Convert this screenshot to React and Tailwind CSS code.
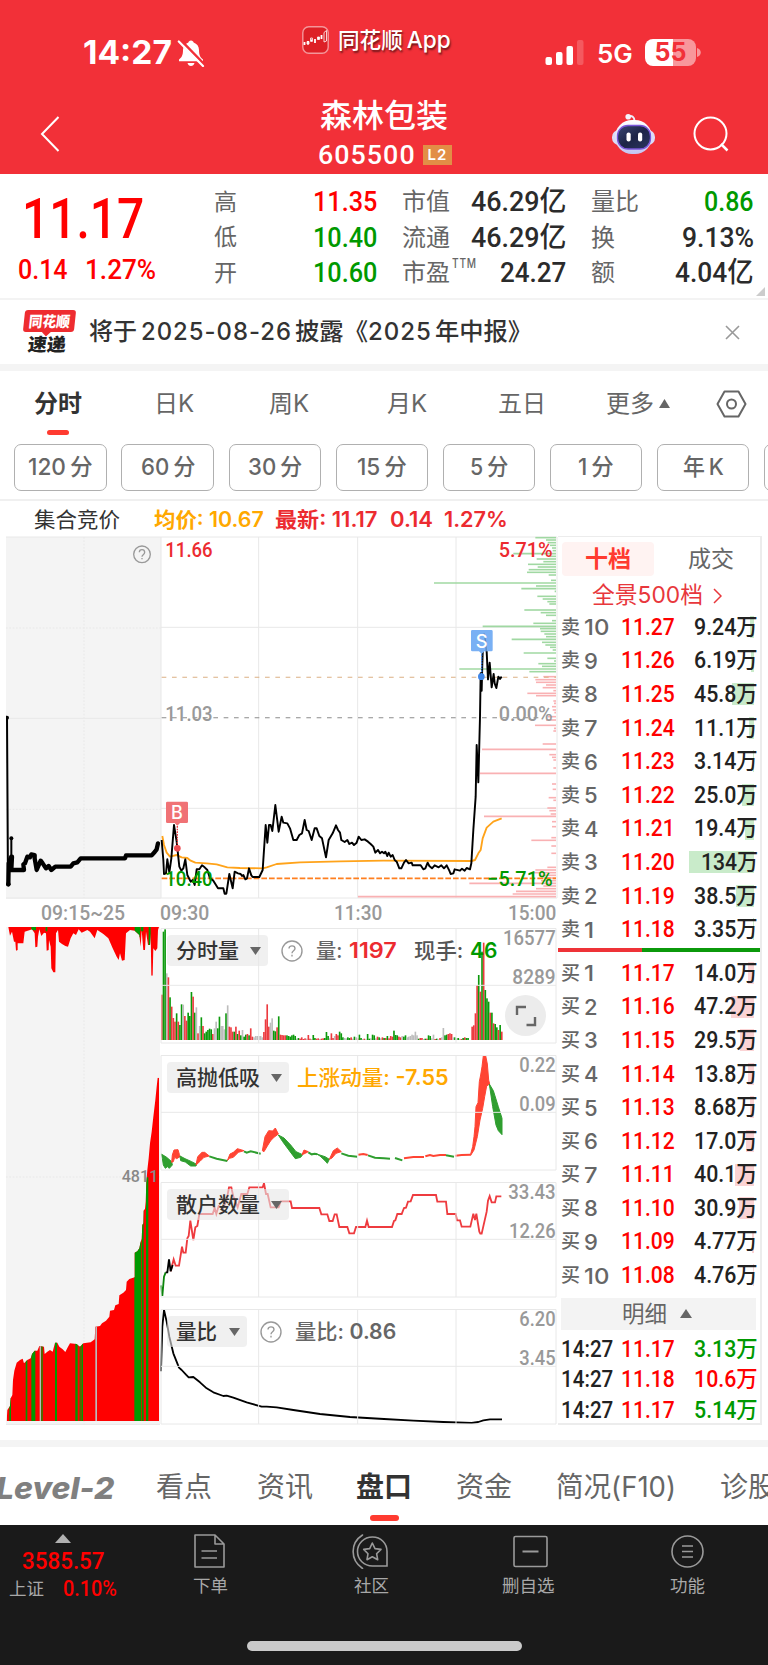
import React, { useLayoutEffect, useRef, useState } from "react";

// Condensed numerals: squeezes its text to exactly w pixels
const Fit = ({ w, className = "", children }) => {
  const ref = useRef(null);
  const [scale, setScale] = useState(1);

  useLayoutEffect(() => {
    const natural = ref.current.offsetWidth;
    if (natural) setScale(w / natural);
  }, [w, children]);

  return (
    <span className="block shrink-0 whitespace-nowrap leading-none" style={{ width: w }}>
      <span
        ref={ref}
        className={`inline-block origin-left leading-none ${className}`}
        style={{ transform: `scaleX(${scale})` }}
      >
        {children}
      </span>
    </span>
  );
};

const num = "font-['Roboto','Noto_Sans_CJK_SC',sans-serif] font-medium";

const periods = ["120分", "60分", "30分", "15分", "5分", "1分", "年K"];
const periodWidths = [65, 54, 54, 50, 38, 36, 41];

const sells = [
  ["10", "11.27", "9.24万", 4],
  ["9", "11.26", "6.19万", 3],
  ["8", "11.25", "45.8万", 22],
  ["7", "11.24", "11.1万", 5],
  ["6", "11.23", "3.14万", 1],
  ["5", "11.22", "25.0万", 12],
  ["4", "11.21", "19.4万", 9],
  ["3", "11.20", "134万", 65],
  ["2", "11.19", "38.5万", 18],
  ["1", "11.18", "3.35万", 1],
];

const buys = [
  ["1", "11.17", "14.0万", 6],
  ["2", "11.16", "47.2万", 23],
  ["3", "11.15", "29.5万", 14],
  ["4", "11.14", "13.8万", 6],
  ["5", "11.13", "8.68万", 4],
  ["6", "11.12", "17.0万", 8],
  ["7", "11.11", "40.1万", 19],
  ["8", "11.10", "30.9万", 15],
  ["9", "11.09", "4.77万", 2],
  ["10", "11.08", "4.76万", 1],
];

const ticks = [
  ["14:27", "11.17", "3.13万", "text-[#009900]"],
  ["14:27", "11.18", "10.6万", "text-[#ff0000]"],
  ["14:27", "11.17", "5.14万", "text-[#009900]"],
];

// Chart data, three units per pixel
const priceLine =
  "485,930 490,990 492,1032 498,1030 502,988 508,1028 514,985 522,885 530,935 538,1010 544,1022 550,1015 556,988 562,1035 572,1055 578,1050 584,1065 590,1018 598,1018 606,1006 614,1012 622,1020 630,1045 640,1052 654,1075 670,1075 674,1091 679,1091 688,1032 698,1075 704,1025 714,1030 722,1032 726,1038 730,1035 736,1048 741,1045 747,1015 754,1036 758,1041 778,1041 788,1020 797,885 802,938 807,885 812,885 817,903 826,825 836,905 845,860 850,878 862,880 870,895 880,930 890,930 898,915 906,910 914,870 920,900 926,903 935,930 944,895 950,895 958,918 966,925 978,982 986,930 998,910 1008,886 1014,900 1020,908 1024,930 1034,936 1042,930 1048,942 1056,938 1062,945 1070,938 1076,920 1084,930 1094,928 1104,935 1112,942 1120,950 1126,968 1134,960 1140,970 1146,965 1152,970 1156,965 1162,978 1166,968 1172,980 1178,975 1184,990 1190,995 1198,1015 1204,1015 1212,998 1218,990 1226,1000 1235,998 1238,1006 1262,1006 1270,1018 1276,1015 1283,998 1288,1008 1296,1015 1304,1006 1316,1012 1324,1006 1332,1015 1340,1006 1348,1022 1352,1032 1360,1030 1364,1018 1380,1022 1386,1016 1394,1022 1400,1014 1410,1018 1414,1000 1420,900 1427,800 1430,645 1435,757 1440,560 1442,430 1445,482 1447,400 1450,312 1456,330 1460,365 1464,448 1469,398 1475,472 1481,432 1484,460 1489,474 1495,440 1500,447 1505,440";
const avgLine =
  "487,918 492,945 500,968 510,980 530,975 545,982 562,984 572,992 586,998 620,1000 650,1003 682,1012 720,1014 788,1015 800,1012 830,1002 900,997 1020,994 1150,992 1415,993 1425,990 1435,970 1442,960 1448,925 1460,893 1480,875 1505,865";
const auctionLine =
  "25,1062 26,1000 34,980 36,980 34,1020 72,1020 70,1003 75,1000 82,980 90,982 94,973 104,975 104,985 110,1020 122,992 128,1000 138,1015 146,1008 154,1020 166,1010 212,1010 220,1000 232,997 242,985 375,985 378,976 455,976 464,966 470,958 474,940";

const askDepth = [
  [23, 62], [30, 30], [38, 25], [46, 18], [54, 12], [62, 10], [71, 128], [79, 20], [87, 58], [95, 38], [103, 84],
  [111, 55], [119, 82], [127, 87], [135, 22], [151, 15], [159, 366], [168, 60], [176, 104], [184, 4], [199, 56],
  [207, 40], [215, 26], [222, 20], [240, 95], [248, 46], [256, 30], [272, 12], [280, 68], [289, 220], [296, 48],
  [304, 46], [312, 35], [320, 30], [328, 133], [337, 42], [345, 32], [352, 18], [360, 10], [369, 97], [385, 26],
  [393, 6], [401, 53], [409, 42], [417, 290], [425, 80],
];
const bidDepth = [
  [440, 38], [449, 62], [457, 60], [465, 30], [473, 40], [482, 8], [490, 86], [497, 60], [513, 8], [520, 6],
  [530, 12], [540, 10], [548, 5], [560, 25], [570, 30], [586, 63], [595, 6], [603, 8], [642, 40], [658, 222],
  [674, 20], [682, 12], [690, 8], [714, 8], [730, 228], [762, 12], [778, 10], [803, 22], [811, 8], [834, 26],
  [842, 20], [852, 16], [859, 216], [875, 12], [890, 12], [923, 14], [931, 74], [948, 14], [970, 14], [1012, 26],
  [1020, 62], [1028, 70], [1036, 50], [1044, 40], [1052, 45], [1060, 260], [1068, 38], [1076, 60], [1084, 120],
  [1092, 130], [1100, 594],
];

const volHead =
  "r136 g325 g332 y200 r188 g128 r100 r66 r55 g80 r55 g45 g107 y106 r72 r58 g82 g72 g144 r130 g82 y98 r20 y42 g68 r42 g20 g25 g30 g34 g32 r18 y35 y55 g35 g70 y42 y42 y32 g80 y104 r40 r38 r25 g25 r40 g18 r28 g14 y30 g10 g16 r18 g14 r35 r10 y8 y12 y12 y12 y12 y8 r24 r62 r107 r40 y52 y65 g28 g26 r38 g71 r16 r15 r14 r14 g14 g12 g10 g14 g16 g12";
const volMid =
  "y4 g6 r4 r8 r3 r5 y4 r15 r4 y3 g15 g6 r4 r5 y3 r4 r5 g6 g24 g12 y5 r20 r6 y12 r18 r14 g25 g20 g8 y6 y5 g8 g6 r8 y4 g10 y8 r5 g16 g6 y3 r4 y2 g18 g4 y5 g16 g14 y5 r10 g8 y5 r8 g6 r6 g12 r5 r12 r10 g28 g15 g14 r10 r8 y12 g10 g14 y8 y10 y12 y16 y14 y25 y14 g4 r6 r6 y3 g4 r4 g14 g12 y5 y16 r3 g4 y2 r6 y8 y36 g14 g16 r18 r20 r18 y8 g8 y5 g6 y4 r3 g6 r8 g6 g6";
const volTail =
  "r40 r44 r80 r165 g195 r145 g265 r292 g150 g125 g115 r82 g82 r50 g48 g38 r30 g45 r25";

const barColor = { r: "#ec3a3f", g: "#0b990b", y: "#bdbdbd" };

const bars = (list, start) =>
  list.split(" ").map((b, i) => ({
    x: start + i * 4.94,
    color: barColor[b[0]],
    h: Number(b.slice(1)),
  }));

const volume = [...bars(volHead, 483), ...bars(volMid, 888), ...bars(volTail, 1414)];

const auctionProfile =
  "20,723 22,690 30,678 32,655 37,645 39,600 43,572 50,548 60,540 68,536 72,550 82,540 92,535 96,522 104,512 112,512 118,498 132,500 134,522 142,515 150,510 158,515 165,488 172,488 178,500 188,508 196,516 204,500 210,490 230,492 240,500 250,490 272,487 284,478 286,440 300,438 306,430 318,422 328,410 330,392 342,390 346,376 356,372 358,346 370,338 378,330 380,305 388,297 404,292 404,218 412,214 418,205 421,190 425,176 427,135 430,130 431,92 435,86 437,65 439,8 442,-30 446,-65 450,-110 455,-145 460,-190 466,-240 470,-280 473,-307 477,-307 477,723";
const auctionStrips = [
  [28, 5], [77, 5], [94, 12], [124, 4], [165, 6], [226, 7], [239, 3], [244, 5], [403, 21], [426, 5], [438, 7],
];
const auctionTop =
  "22,21 25,21 30,47 36,35 42,65 46,65 48,92 53,90 53,70 70,70 74,35 90,30 96,28 104,40 106,82 112,80 114,50 118,28 124,48 132,38 138,40 140,92 146,90 147,60 152,80 154,145 160,157 166,157 168,40 174,30 177,65 186,72 196,78 204,80 212,55 220,40 228,45 236,28 245,38 262,30 270,35 284,55 292,30 310,42 325,55 338,85 350,110 356,120 360,100 366,122 374,120 378,40 390,30 404,32 418,45 422,80 425,30 430,90 435,90 438,35 444,75 450,75 452,40 454,167 458,167 460,85 466,93 472,85 474,30 477,21";

const swing = [
  ["#2f9e2f", "484,702 500,712 515,725 517,735 508,745 502,740 496,745 490,735 487,715"],
  ["#ff4433", "515,727 517,705 522,690 534,689 538,703 540,710 530,716 524,712 520,725"],
  ["#2f9e2f", "540,708 555,716 575,725 590,733 588,738 572,738 556,726 542,722"],
  ["#ff4433", "588,735 593,710 606,697 614,697 628,708 612,712 600,724"],
  ["#ff4433", "682,722 690,702 700,697 712,686 732,692 715,697 700,712 688,715"],
  ["#ff4433", "787,692 795,650 806,632 818,633 826,624 835,642 822,652 812,662 802,678 792,695"],
  ["#2f9e2f", "835,645 852,654 872,675 888,695 908,704 902,712 886,716 868,692 848,665"],
  ["#ff4433", "906,704 912,690 925,695 916,700"],
  ["#2f9e2f", "950,702 975,710 988,718 982,730 975,722 960,708"],
  ["#ff4433", "988,718 1000,692 1012,684 1024,695 1008,700 996,714"],
  ["#ff4433", "1412,702 1418,680 1422,650 1425,620 1428,560 1434,548 1438,485 1442,465 1446,440 1450,407 1457,407 1462,432 1466,480 1469,492 1460,498 1454,530 1448,565 1440,600 1432,650 1422,690 1412,706"],
  ["#2f9e2f", "1468,492 1480,512 1495,560 1506,595 1506,644 1495,632 1488,615 1478,560"],
];
const swingLines = [
  ["#2f9e2f", "628,709 650,716 682,723"],
  ["#2f9e2f", "732,694 740,698 752,694 782,701"],
  ["#2f9e2f", "925,697 935,703 944,701 952,703"],
  ["#2f9e2f", "1024,700 1045,707 1072,710"],
  ["#ff4433", "1075,704 1090,702 1103,705"],
  ["#2f9e2f", "1104,706 1125,713 1152,715 1170,716"],
  ["#2f9e2f", "1185,714 1207,721"],
  ["#ff4433", "1212,715 1240,711 1272,711"],
  ["#ff4433", "1276,709 1290,705 1300,708 1320,705 1338,705"],
  ["#2f9e2f", "1338,706 1362,710"],
  ["#ff4433", "1366,707 1385,705 1412,704"],
];

const holderLine =
  "512,274 521,238 527,257 537,257 546,200 550,218 557,218 562,175 566,168 571,122 580,180 586,142 592,138 598,102 638,102 644,84 649,102 656,78 670,84 680,60 687,22 694,22 700,50 713,82 724,42 742,42 748,22 788,22 792,10 798,42 803,42 812,82 836,82 842,64 872,64 876,84 958,84 964,103 982,103 988,123 998,123 1004,103 1010,103 1018,141 1042,141 1048,160 1062,160 1068,141 1096,141 1101,122 1106,141 1176,141 1182,123 1186,121 1192,102 1205,102 1212,84 1218,83 1224,65 1232,64 1239,45 1308,45 1312,65 1338,65 1342,102 1367,102 1371,121 1380,121 1385,140 1411,140 1420,101 1425,120 1429,101 1438,155 1441,161 1445,161 1460,95 1464,62 1469,48 1475,67 1485,67 1489,49 1504,49";
const ratioLine =
  "483,574 487,440 492,390 500,425 508,470 520,520 537,563 545,570 558,584 566,592 580,591 600,607 620,625 640,637 670,648 680,647 700,653 740,667 785,680 800,680 830,682 880,690 960,702 1050,711 1152,717 1240,722 1330,726 1415,729 1435,726 1450,721 1470,718 1506,718";

const AxisText = ({ x, y, len, fill = "#999", size = 63, children }) => (
  <text
    x={x}
    y={y}
    textLength={len}
    lengthAdjust="spacingAndGlyphs"
    fill={fill}
    fontSize={size}
    fontFamily="Roboto, sans-serif"
    fontWeight="500"
  >
    {children}
  </text>
);

// Grid, frame and the two scale values of a lower pane
const Pane = ({ top, high, low, highLen, lowLen, children, overlay }) => (
  <div className="relative h-[116px] w-[397px]">
    <svg className="block h-full w-full" viewBox={`480 ${top} 1191 348`}>
      {overlay}
      <g stroke="#e8e8e8" strokeWidth="3" fill="none">
        <path d={`M483 ${top + 1.5}H1668V${top + 345}H483Z`} />
        <path d={`M483 ${top + 172}H1668M776 ${top}V${top + 345}M1073 ${top}V${top + 345}M1368 ${top}V${top + 345}`} />
      </g>
      <AxisText x={1667 - highLen} y={top + 52} len={highLen}>{high}</AxisText>
      <AxisText x={1667 - lowLen} y={top + 168} len={lowLen}>{low}</AxisText>
    </svg>
    {children}
  </div>
);

const Pill = ({ label, w, textW }) => (
  <div
    className="flex h-[31px] items-center rounded-[4px] bg-[#e6e6e6]/60 pl-[9px] pr-[7px]"
    style={{ width: w }}
  >
    <Fit w={textW} className="text-[21px] font-medium text-[#333]">{label}</Fit>
    <svg className="ml-auto h-[8px] w-[11px]" viewBox="0 0 11 8">
      <path d="M0 0H11L5.5 8Z" fill="#666" />
    </svg>
  </div>
);

const Help = ({ className = "" }) => (
  <svg className={`h-[22px] w-[22px] shrink-0 ${className}`} viewBox="0 0 22 22" fill="none" stroke="#999" strokeWidth="1.4">
    <circle cx="11" cy="11" r="10" />
    <path d="M8 8.6C8 5 14 5 14 8.6C14 11 11 10.6 11 13.2M11 14.8V16.4" />
  </svg>
);

const StatusBar = () => (
  <div className="relative flex h-[96px] items-start pt-[38px] text-white">
    <div className="ml-[83px] flex h-[30px] items-center">
      <Fit w={89} className="text-[32px] font-bold">14:27</Fit>
      <svg className="ml-[5px] h-[28px] w-[28px]" viewBox="0 0 28 28">
        <path d="M14 1.5c-1.6 0-2.4 1-2.6 2.1C8 4.8 6 7.5 6 11c0 6-1.7 7.5-4 9.5v1.8h24v-1.8c-2.3-2-4-3.5-4-9.5 0-3.5-2-6.2-5.4-7.4C16.4 2.5 15.6 1.5 14 1.5zM10.5 24h7c-.5 1.9-1.8 3-3.5 3s-3-1.1-3.5-3z" fill="#fff" />
        <path d="M4 1.5L28 26" stroke="#f23038" strokeWidth="2.6" />
        <path d="M1.8 2.5L26 27" stroke="#fff" strokeWidth="2.2" strokeLinecap="round" />
      </svg>
    </div>
    <div className="absolute left-[302px] top-[26px] flex items-center">
      <svg className="h-[28px] w-[27px]" viewBox="0 0 27 28" fill="none">
        <rect x="0.8" y="0.8" width="25.4" height="26.4" rx="6" fill="#dd2026" stroke="#f4969a" strokeWidth="1.4" />
        <path d="M2.500 16V19M6 15V18.500M9.500 13.500V15M13 13V17M16.500 11V13.500M19.500 9V13" stroke="#fff" strokeWidth="1.800" />
        <path d="M5 15.500H7V18H5ZM8.600 12H10.400V15.500H8.600ZM15.500 11H17.500V13.500H15.500ZM22 16V6.500L24.500 4.500V15L22 16" stroke="#fff" strokeWidth="0.800" />
      </svg>
      <span className="ml-[9px] [text-shadow:1px_2px_2px_rgba(0,0,0,0.55)]">
        <Fit w={113} className="text-[22px] font-medium">
          同花顺<span className="ml-[4px] text-[23px]">App</span>
        </Fit>
      </span>
    </div>
    <div className="ml-auto mr-[67px] flex h-[28px] items-center">
      <svg className="h-[25px] w-[39px]" viewBox="0 0 39 25" fill="#fff">
        <rect x="0.5" y="17" width="6.5" height="8" rx="2" />
        <rect x="11" y="12" width="6.5" height="13" rx="2" />
        <rect x="21.5" y="6" width="6.5" height="19" rx="2" />
        <rect x="32" y="0" width="6.5" height="25" rx="2" opacity="0.2" />
      </svg>
      <span className="ml-[13px] mt-[3px]">
        <Fit w={36} className="text-[26px] font-semibold">5G</Fit>
      </span>
      <div className="ml-[12px] flex h-[27px] w-[51px] items-center justify-center rounded-[8px] bg-[linear-gradient(90deg,#fff_0_28px,#f8979b_28px)] text-[25px] font-bold leading-none text-[#f23038]">
        55
      </div>
      <svg className="ml-[1px] h-[9px] w-[4px]" viewBox="0 0 4 9">
        <path d="M0 0C5 1 5 8 0 9Z" fill="#f8979b" />
      </svg>
    </div>
  </div>
);

const Header = () => (
  <header className="h-[174px] bg-[#f23038]">
    <StatusBar />
    <div className="flex h-[78px] text-white">
      <svg className="ml-[40px] mt-[20px] h-[36px] w-[20px]" viewBox="0 0 20 36" fill="none" stroke="#fff" strokeWidth="2">
        <path d="M18.5 1L2 18L18.5 35" />
      </svg>
      <div className="ml-[258px] w-[138px]">
        <div className="ml-[2px] mt-[4px]">
          <Fit w={128} className="text-[32px] font-medium">森林包装</Fit>
        </div>
        <div className="mt-[11px] flex h-[24px] items-center">
          <Fit w={98} className={`text-[26px] tracking-[1px] ${num}`}>605500</Fit>
          <span className="ml-[7px] flex h-[20px] w-[29px] items-center justify-center bg-[#e28e46] text-[15px] font-semibold tracking-[1px]">L2</span>
        </div>
      </div>
      <svg className="ml-[155px] mt-[17px] h-[42px] w-[45px]" viewBox="0 0 45 42">
        <defs>
          <linearGradient id="shell" x1="0" y1="0" x2="0" y2="1">
            <stop offset="0" stopColor="#fff" />
            <stop offset="1" stopColor="#c3c5f2" />
          </linearGradient>
          <linearGradient id="visor" x1="0" y1="0" x2="1" y2="1">
            <stop offset="0" stopColor="#3a4672" />
            <stop offset="0.5" stopColor="#1d2447" />
            <stop offset="1" stopColor="#2b3560" />
          </linearGradient>
        </defs>
        <path d="M17 3.5C21 2 23.5 4 23.5 8" stroke="#eeeefa" strokeWidth="2" fill="none" />
        <circle cx="17.2" cy="3.8" r="2.8" fill="#f4f4fc" />
        <rect x="1" y="17" width="43" height="15" rx="7" fill="#dcdcf8" />
        <rect x="4" y="7" width="37" height="34" rx="17" fill="url(#shell)" />
        <rect x="6.5" y="12.5" width="33" height="23.5" rx="10.5" fill="url(#visor)" stroke="#7a55d8" strokeWidth="1.3" />
        <rect x="15.5" y="19.5" width="4.2" height="9" rx="2" fill="#fff" />
        <rect x="27" y="19.5" width="4.2" height="9" rx="2" fill="#fff" />
      </svg>
      <svg className="ml-[37px] mt-[20px] h-[36px] w-[36px]" viewBox="0 0 36 36" fill="none" stroke="#fff" strokeWidth="2">
        <circle cx="17.5" cy="17.5" r="16" />
        <path d="M28 28L34.5 34.5" strokeWidth="2.5" />
      </svg>
    </div>
  </header>
);

const Quote = () => (
  <section className="relative flex h-[126px] border-b-2 border-[#f3f3f3]">
    <div className="w-[214px] text-[#ff0000]">
      <div className="ml-[22px] mt-[18px]">
        <Fit w={122} className={`text-[55px] ${num}`}>11.17</Fit>
      </div>
      <div className="ml-[18px] mt-[9px] flex">
        <Fit w={50} className={`text-[28px] ${num}`}>0.14</Fit>
        <span className="ml-[17px]">
          <Fit w={71} className={`text-[28px] ${num}`}>1.27%</Fit>
        </span>
      </div>
    </div>
    <div className="flex w-[163px] flex-col gap-[7.5px] pt-[14px]">
      {[["高", "11.35", "text-[#ff0000]"], ["低", "10.40", "text-[#009900]"], ["开", "10.60", "text-[#009900]"]].map(([l, v, c]) => (
        <div key={l} className="flex h-[28px] items-center justify-between">
          <span className="text-[23px] leading-none text-[#666]">{l}</span>
          <Fit w={64} className={`text-[28px] ${num} ${c}`}>{v}</Fit>
        </div>
      ))}
    </div>
    <div className="ml-[25px] flex w-[164px] flex-col gap-[7.5px] pt-[14px]">
      {[["市值", "46.29亿", 95], ["流通", "46.29亿", 95], ["市盈", "24.27", 66]].map(([l, v, w]) => (
        <div key={l} className="flex h-[28px] items-center">
          <span className="text-[24px] leading-none text-[#666]">{l}</span>
          {l === "市盈" && (
            <span className="ml-[2px] -mt-[22px]">
              <Fit w={25} className="text-[13px] font-medium tracking-[1px] text-[#666]">TTM</Fit>
            </span>
          )}
          <span className="ml-auto">
            <Fit w={w} className={`text-[28px] text-[#2b2b2b] ${num}`}>{v}</Fit>
          </span>
        </div>
      ))}
    </div>
    <div className="ml-[25px] flex w-[163px] flex-col gap-[7.5px] pt-[14px]">
      {[["量比", "0.86", 50, "text-[#009900]"], ["换", "9.13%", 72, "text-[#2b2b2b]"], ["额", "4.04亿", 79, "text-[#2b2b2b]"]].map(([l, v, w, c]) => (
        <div key={l} className="flex h-[28px] items-center justify-between">
          <span className="text-[24px] leading-none text-[#666]">{l}</span>
          <Fit w={w} className={`text-[28px] ${num} ${c}`}>{v}</Fit>
        </div>
      ))}
    </div>
    <svg className="absolute bottom-[2px] right-[3px] h-[9px] w-[9px]" viewBox="0 0 9 9">
      <path d="M9 0V9H0Z" fill="#ccc" />
    </svg>
  </section>
);

const NewsRow = () => (
  <section className="flex h-[71px] items-center border-b-[7px] border-[#f4f4f4]">
    <div className="ml-[22px] flex w-[54px] flex-col items-center">
      <div className="relative flex h-[22px] w-[51px] -skew-x-6 items-center justify-center rounded-[3px] bg-[#ee2c30] text-white">
        <Fit w={41} className="text-[15px] font-black">同花顺</Fit>
        <span className="absolute -bottom-[3px] left-[20px] h-[7px] w-[7px] rotate-45 bg-[#ee2c30]"></span>
      </div>
      <div className="mr-[4px] mt-[4px] -skew-x-6 text-[#222]">
        <Fit w={38} className="text-[18px] font-black">速递</Fit>
      </div>
    </div>
    <div className="ml-[13px] flex items-center text-[24px] font-medium text-[#333]">
      <Fit w={48}>将于</Fit>
      <span className="ml-[4px]"><Fit w={151} className="tracking-[1px]">2025-08-26</Fit></span>
      <span className="ml-[3px]"><Fit w={73}>披露《</Fit></span>
      <Fit w={64} className="tracking-[1px]">2025</Fit>
      <span className="ml-[3px]"><Fit w={97}>年中报》</Fit></span>
    </div>
    <svg className="ml-auto mr-[28px] h-[15px] w-[15px]" viewBox="0 0 15 15" stroke="#999" strokeWidth="1.6">
      <path d="M1 1L14 14M14 1L1 14" />
    </svg>
  </section>
);

const KTabs = () => (
  <nav className="relative flex h-[73px] items-start pt-[21px] text-[24px] leading-none text-[#666]">
    <div className="ml-[34px] w-[120px] font-bold text-[#333]">
      分时
      <div className="ml-[13px] mt-[14px] h-[5px] w-[22px] rounded-full bg-[#ff3b30]"></div>
    </div>
    <div className="w-[115px]">日K</div>
    <div className="w-[118px]">周K</div>
    <div className="w-[111px]">月K</div>
    <div className="w-[108px]">五日</div>
    <div className="flex w-[110px]">
      更多
      <svg className="ml-[5px] mt-[7px] h-[9px] w-[11px]" viewBox="0 0 11 9">
        <path d="M5.5 0L11 9H0Z" fill="#666" />
      </svg>
    </div>
    <svg className="-mt-[2px] h-[28px] w-[31px]" viewBox="0 0 31 28" fill="none" stroke="#666" strokeWidth="2">
      <path d="M8.5 1.5H22.5L29.5 14L22.5 26.5H8.5L1.5 14Z" strokeLinejoin="round" />
      <circle cx="15.5" cy="14" r="4.5" />
    </svg>
  </nav>
);

const PeriodBar = () => (
  <div className="flex h-[57px] gap-[14.6px] overflow-hidden border-b-2 border-[#f0f0f0] pl-[14.4px]">
    {periods.map((p, i) => (
      <div key={p} className="flex h-[47px] w-[92.5px] shrink-0 items-center justify-center rounded-[7px] border border-[#b0b0b0]">
        <Fit w={periodWidths[i]} className="text-[23px] font-medium text-[#666]">
          {p.slice(0, -1)}
          <span className="ml-[4px]">{p.slice(-1)}</span>
        </Fit>
      </div>
    ))}
    <div className="h-[47px] w-[92px] shrink-0 rounded-[7px] border border-[#b0b0b0]"></div>
  </div>
);

const Legend = () => (
  <div className="flex h-[35px] items-center pt-[2px]">
    <span className="ml-[34px]">
      <Fit w={86} className="text-[21px] text-[#333]">集合竞价</Fit>
    </span>
    <span className="ml-[34px]">
      <Fit w={110} className="text-[21px] font-semibold text-[#ffa800]">均价: 10.67</Fit>
    </span>
    <span className="ml-[11px]">
      <Fit w={103} className="text-[21px] font-semibold text-[#ec2b30]">最新: 11.17</Fit>
    </span>
    <span className="ml-[12px]">
      <Fit w={43} className="text-[21px] font-semibold text-[#ec2b30]">0.14</Fit>
    </span>
    <span className="ml-[11px]">
      <Fit w={64} className="text-[21px] font-semibold text-[#ec2b30]">1.27%</Fit>
    </span>
  </div>
);

const PriceChart = () => (
  <svg className="block h-[363px] w-[552px]" viewBox="18 18 1656 1089">
    <rect x="18" y="21" width="465" height="1086" fill="#f4f4f4" />
    <g stroke="#e8e8e8" strokeWidth="3" fill="none">
      <path d="M18 21H1671V1104H18" />
      <path d="M483 21V1104M776 21V1104M1073 21V1104M1368 21V1104M483 292H1668M483 835H1668M18 565H483" />
      <path d="M252 21V1104M18 294H483M18 838H483" strokeDasharray="5 5" />
    </g>
    <g stroke="#a0d8a2" strokeWidth="4.8">
      {askDepth.map(([y, l]) => <path key={y} d={`M${1668 - l} ${y}H1668`} />)}
    </g>
    <g stroke="#f9b1b3" strokeWidth="4.8">
      {bidDepth.map(([y, l]) => <path key={y} d={`M${1668 - l} ${y}H1668`} />)}
    </g>
    <path d="M485 442H1668" stroke="#dcb084" strokeWidth="3.2" strokeDasharray="14 17" />
    <path d="M485 563H1620" stroke="#8c8c8c" strokeWidth="3.2" strokeDasharray="14 17" />
    <path d="M485 1045H1668" stroke="#ff7f1f" strokeWidth="5" strokeDasharray="17 6" />
    <path d="M21 562L24 1062M34 925V1020" stroke="#000" strokeWidth="6" />
    <circle cx="21" cy="563" r="6" />
    <circle cx="25" cy="1063" r="7" />
    <circle cx="34" cy="925" r="6" />
    <polyline points={auctionLine} fill="none" stroke="#000" strokeWidth="13" strokeLinejoin="round" strokeLinecap="round" />
    <polyline points={avgLine} fill="none" stroke="#ffa31a" strokeWidth="5.5" strokeLinejoin="round" />
    <polyline points={priceLine} fill="none" stroke="#000" strokeWidth="5.8" strokeLinejoin="round" />

    <AxisText x={496} y={81} len={142} fill="#ec2b30">11.66</AxisText>
    <AxisText x={496} y={574} len={142}>11.03</AxisText>
    <AxisText x={496} y={1067} len={142} fill="#009900">10.40</AxisText>
    <AxisText x={1496} y={81} len={162} fill="#ec2b30">5.71%</AxisText>
    <AxisText x={1496} y={574} len={162}>0.00%</AxisText>
    <AxisText x={1462} y={1067} len={196} fill="#009900">−5.71%</AxisText>

    <g fill="none" stroke="#999" strokeWidth="4">
      <circle cx="426" cy="73" r="25" />
      <path d="M418 67C418 56 434 56 434 67C434 74 426 74 426 80M426 84V88" />
    </g>

    <path d="M532 880V955" stroke="#ec3a3f" strokeWidth="4" strokeDasharray="5 3" />
    <circle cx="532" cy="955" r="10" fill="#ee4a50" />
    <path d="M502 815H560Q564 815 564 819V875Q564 879 560 879H540L532 887L524 879H502Q498 879 498 875V819Q498 815 502 815Z" fill="#f07275" />
    <text x="531" y="867" textAnchor="middle" fill="#fff" fontSize="54" fontFamily="Inter, sans-serif" fontWeight="500">B</text>

    <path d="M1445 365V440" stroke="#3f86e8" strokeWidth="4" strokeDasharray="5 3" />
    <circle cx="1444" cy="440" r="10" fill="#3f86e8" />
    <path d="M1417 300H1474Q1478 300 1478 304V360Q1478 364 1474 364H1453L1445 372L1437 364H1417Q1413 364 1413 360V304Q1413 300 1417 300Z" fill="#79b0f4" />
    <path d="M1452 310L1457 335L1459 364" fill="none" stroke="#4d6f99" strokeWidth="4" opacity="0.6" />
    <text x="1445" y="353" textAnchor="middle" fill="#fff" fontSize="55" fontFamily="Inter, sans-serif" fontWeight="500">S</text>
  </svg>
);

const TimeAxis = () => (
  <div className={`flex h-[29px] w-[552px] items-center text-[21px] text-[#999] ${num}`}>
    <span className="ml-[35px]"><Fit w={84}>09:15~25</Fit></span>
    <span className="ml-[35px]"><Fit w={49}>09:30</Fit></span>
    <span className="ml-[125px]"><Fit w={48}>11:30</Fit></span>
    <span className="ml-[126px]"><Fit w={48}>15:00</Fit></span>
  </div>
);

const AuctionVolume = () => (
  <svg className="-mt-px block h-[498px] w-[154px] shrink-0" viewBox="18 -759 462 1494">
    <defs>
      <clipPath id="auction">
        <polygon points={auctionProfile} />
      </clipPath>
      <clipPath id="auctionTop">
        <polygon points={auctionTop} />
      </clipPath>
    </defs>
    <rect x="18" y="-759" width="462" height="1494" fill="#f4f4f4" />
    <path d="M252 -759V735M18 -9H480" stroke="#e8e8e8" strokeWidth="3" strokeDasharray="5 5" />
    <g clipPath="url(#auction)">
      <rect x="18" y="-320" width="462" height="1043" fill="#ff0000" />
      {auctionStrips.map(([x, w]) => (
        <rect key={x} x={x} y={x === 438 ? -8 : -320} width={w} height="1200" fill="#009900" />
      ))}
      <rect x="119" y="0" width="4" height="723" fill="#bbb" />
      <rect x="286" y="0" width="5" height="723" fill="#bbb" />
    </g>
    <g transform="translate(0 -780)" clipPath="url(#auctionTop)">
      <rect x="18" y="20" width="462" height="200" fill="#ff0000" />
      <path d="M94 20H108V31H94ZM404 20H420V52H404ZM422 20H430V34H422ZM446 20H452V75H446ZM137 20H142V34H137Z" fill="#009900" />
    </g>
    <path d="M18 733H480" stroke="#e8e8e8" strokeWidth="3" />
    <AxisText x={365} y={6} len={110} fill="#888" size={50}>4811</AxisText>
  </svg>
);

const LowerPanes = () => (
  <div className="flex flex-col gap-[11px]">
    <Pane
      top={24} high="16577" low="8289" highLen={158} lowLen={130}
      overlay={volume.map((b) => (
        <rect key={b.x} x={b.x} y={360 - b.h} width="4.9" height={b.h} fill={b.color} />
      ))}
    >
      <div className="absolute left-[7px] top-[7px] flex items-center text-[21px] font-medium">
        <Pill label="分时量" w={101} textW={63} />
        <Help className="ml-[13px]" />
        <span className="ml-[13px] text-[#666]"><Fit w={26}>量:</Fit></span>
        <span className="ml-[7px] text-[#ec2b30]"><Fit w={48} className="font-semibold">1197</Fit></span>
        <span className="ml-[17px] text-[#555]"><Fit w={49}>现手:</Fit></span>
        <span className="ml-[7px] text-[#009900]"><Fit w={27} className="font-semibold">46</Fit></span>
      </div>
      <div className="absolute left-[345px] top-[67px] flex h-[41px] w-[41px] items-center justify-center rounded-full bg-[#ececec]">
        <svg className="h-[22px] w-[22px]" viewBox="0 0 22 22" fill="none" stroke="#666" strokeWidth="2.4">
          <path d="M2 10V2H11M20 12V20H11.5" />
        </svg>
      </div>
    </Pane>
    <Pane
      top={405} high="0.22" low="0.09" highLen={109} lowLen={109}
      overlay={
        <>
          {swing.map(([c, pts]) => <polygon key={pts} points={pts} fill={c} stroke={c} strokeWidth="3" />)}
          {swingLines.map(([c, pts]) => <polyline key={pts} points={pts} fill="none" stroke={c} strokeWidth="6" />)}
        </>
      }
    >
      <div className="absolute left-[7px] top-[7px] flex items-center text-[21px] font-medium">
        <Pill label="高抛低吸" w={122} textW={84} />
        <span className="ml-[8px] text-[#ffa800]"><Fit w={152}>上涨动量: <span className="font-semibold">-7.55</span></Fit></span>
      </div>
    </Pane>
    <Pane
      top={6} high="33.43" low="12.26" highLen={142} lowLen={140}
      overlay={
        <g fill="none" strokeWidth="5.5">
          <polyline points={holderLine} stroke="#ee3b3f" />
          <polyline points="483,316 487,348 492,290 497,277" stroke="#0b850b" />
          <polyline points="497,277 502,277 507,238 512,274 518,255" stroke="#000" />
        </g>
      }
    >
      <div className="absolute left-[7px] top-[7px]">
        <Pill label="散户数量" w={122} textW={84} />
      </div>
    </Pane>
    <Pane
      top={387} high="6.20" low="3.45" highLen={109} lowLen={109}
      overlay={<polyline points={ratioLine} fill="none" stroke="#000" strokeWidth="5.5" strokeLinejoin="round" />}
    >
      <div className="absolute left-[7px] top-[7px] flex items-center text-[21px] font-medium text-[#666]">
        <Pill label="量比" w={80} textW={41} />
        <Help className="ml-[13px]" />
        <span className="ml-[13px]"><Fit w={101}>量比: <span className="font-semibold">0.86</span></Fit></span>
      </div>
    </Pane>
  </div>
);

const BookRow = ({ side, row, bar }) => {
  const [level, price, vol, w] = row;
  return (
    <div className="relative flex h-[33.6px] items-center pt-px">
      <div className={`absolute right-[2px] top-[6px] h-[22px] ${bar}`} style={{ width: w }}></div>
      <span className="relative w-[23px] text-[19px] font-medium leading-none text-[#666]">{side}</span>
      <span className="relative w-[37px]">
        <Fit w={level.length > 1 ? 25 : level === "1" ? 10 : 14} className="text-[22px] font-medium text-[#666]">{level}</Fit>
      </span>
      <span className="relative">
        <Fit w={54} className={`text-[23px] text-[#ff0000] ${num}`}>{price}</Fit>
      </span>
      <span className="relative -mr-[2px] ml-auto">
        <Fit w={vol.length > 4 ? 64 : 57} className={`text-[23px] text-[#222] ${num}`}>{vol}</Fit>
      </span>
    </div>
  );
};

const OrderBook = () => (
  <aside className="h-[889px] w-[204px] border-b-2 border-r-2 border-t border-[#ececec]">
    <div className="flex pt-[5px] text-[23px] leading-none">
      <div className="ml-[4px] flex h-[34px] w-[92px] items-center justify-center rounded-[4px] bg-[#fff3f2] font-bold text-[#ff3b30]">十档</div>
      <div className="flex h-[34px] flex-1 items-center justify-center pl-[8px] text-[#666]">成交</div>
    </div>
    <div className="ml-[34px] flex h-[34px] items-center pt-[5px] text-[#e8373c]">
      <Fit w={111} className="text-[23px]">全景500档</Fit>
      <svg className="ml-[10px] h-[16px] w-[9px]" viewBox="0 0 9 16" fill="none" stroke="#e8373c" strokeWidth="1.5">
        <path d="M1 1L8 8L1 15" />
      </svg>
    </div>
    <div className="ml-[3px] mr-[4px]">
      {sells.map((r) => <BookRow key={r[0]} side="卖" row={r} bar="bg-[#c9ebca]" />)}
    </div>
    <div className="mb-[4px] mt-[2px] flex h-[4px]">
      <div className="w-[84px] bg-[#ee3338]"></div>
      <div className="flex-1 bg-[#0b990b]"></div>
    </div>
    <div className="ml-[3px] mr-[4px]">
      {buys.map((r) => <BookRow key={r[0]} side="买" row={r} bar="bg-[#fbd3d4]" />)}
      <div className="mb-[4px] mt-[6px] flex h-[32px] items-center bg-[#f3f3f3]">
        <span className="ml-[61px] text-[22.5px] leading-none text-[#666]">明细</span>
        <svg className="ml-[13px] h-[9px] w-[12px]" viewBox="0 0 12 9">
          <path d="M6 0L12 9H0Z" fill="#666" />
        </svg>
      </div>
      {ticks.map(([t, p, v, c], i) => (
        <div key={i} className="flex h-[30.5px] items-center">
          <span className="w-[60px]">
            <Fit w={52} className={`text-[23px] text-[#222] ${num}`}>{t}</Fit>
          </span>
          <Fit w={54} className={`text-[23px] text-[#ff0000] ${num}`}>{p}</Fit>
          <span className="-mr-[2px] ml-auto">
            <Fit w={64} className={`text-[23px] ${num} ${c}`}>{v}</Fit>
          </span>
        </div>
      ))}
    </div>
  </aside>
);

const PageTabs = () => (
  <nav className="flex h-[85px] items-start overflow-hidden border-t-[7px] border-[#f4f4f4] pt-[26px] text-[28px] leading-none text-[#666]">
    <div className="-ml-[4px] w-[160px] shrink-0">
      <Fit w={118} className="text-[30px] font-extrabold italic text-[#808080]">Level-2</Fit>
    </div>
    <div className="w-[101px] shrink-0">看点</div>
    <div className="w-[99px] shrink-0">资讯</div>
    <div className="w-[100px] shrink-0 font-bold text-[#333]">
      盘口
      <div className="ml-[14px] mt-[14px] h-[6px] w-[29px] rounded-full bg-[#ff3b30]"></div>
    </div>
    <div className="w-[100px] shrink-0">资金</div>
    <div className="w-[164px] shrink-0">
      <Fit w={120}>简况(F10)</Fit>
    </div>
    <div className="shrink-0">诊股</div>
  </nav>
);

const BottomBar = () => (
  <footer className="h-[140px] bg-[#1a1a1a] text-[#a8a8a8]">
    <div className="flex h-[116px] text-[17.5px] leading-none">
      <div className="w-[126px] pt-[9px]">
        <svg className="ml-[55px] h-[9px] w-[16px]" viewBox="0 0 16 9">
          <path d="M8 0L16 9H0Z" fill="#b0b0b0" />
        </svg>
        <div className="ml-[22px] mt-[6px]">
          <Fit w={83} className={`text-[24px] text-[#ff0000] ${num}`}>3585.57</Fit>
        </div>
        <div className="mt-[5px] flex items-center">
          <span className="ml-[9px] text-[17.5px]">上证</span>
          <span className="ml-[19px]">
            <Fit w={54} className={`text-[22px] text-[#ff0000] ${num}`}>0.10%</Fit>
          </span>
        </div>
      </div>
      <div className="ml-[68px] w-[36px] pt-[9px]">
        <svg className="h-[35px] w-[32px]" viewBox="0 0 32 35" fill="none" stroke="#9a9a9a" strokeWidth="1.6">
          <path d="M2 1H21L30 10V33H1V1H3M21 1V10H30M7.5 17H23M7.5 24H23" strokeLinejoin="round" />
        </svg>
        <div className="-ml-px mt-[8px]">下单</div>
      </div>
      <div className="ml-[122px] w-[40px] pt-[9px]">
        <svg className="h-[35px] w-[37px]" viewBox="0 0 37 35" fill="none" stroke="#9a9a9a" strokeWidth="1.6" strokeLinecap="round">
          <path d="M10.5 1C-2 9-2 26 10.5 34.5" />
          <path d="M20.5 3C12 3 5.5 9.5 5.5 17.5S12 32 20.5 32H35V17.5C35 9.5 29 3 20.5 3Z" />
          <path d="M20.3 9L23 14.6L29 15.4L24.6 19.7L25.7 25.7L20.3 22.8L15 25.7L16 19.7L11.7 15.4L17.7 14.6Z" strokeLinejoin="round" />
        </svg>
        <div className="ml-[2px] mt-[8px]">社区</div>
      </div>
      <div className="ml-[110px] w-[56px] pt-[9px]">
        <svg className="ml-[11px] h-[35px] w-[35px]" viewBox="0 0 35 35" fill="none" stroke="#9a9a9a" strokeWidth="1.6">
          <rect x="1" y="2.5" width="33" height="30" rx="1.5" />
          <path d="M9.5 17.5H25.5" strokeWidth="2" />
        </svg>
        <div className="mt-[8px]">删自选</div>
      </div>
      <div className="ml-[112px] w-[36px] pt-[9px]">
        <svg className="h-[35px] w-[35px]" viewBox="0 0 35 35" fill="none" stroke="#9a9a9a" strokeWidth="1.6">
          <circle cx="17.5" cy="17.5" r="15.5" />
          <path d="M12 12H23M12 17.5H23M12 23H23" />
        </svg>
        <div className="mt-[8px]">功能</div>
      </div>
    </div>
    <div className="mx-auto h-[10px] w-[275px] rounded-full bg-[#cacaca]"></div>
  </footer>
);

const App = () => {
  return (
    <div className="h-[1665px] w-[768px] overflow-hidden bg-white font-['Inter','Noto_Sans_CJK_SC',sans-serif]">
      <Header />
      <Quote />
      <NewsRow />
      <KTabs />
      <PeriodBar />
      <Legend />
      <main className="flex h-[904px] pl-[6px]">
        <div className="w-[552px] shrink-0">
          <PriceChart />
          <TimeAxis />
          <div className="flex">
            <AuctionVolume />
            <LowerPanes />
          </div>
        </div>
        <OrderBook />
      </main>
      <PageTabs />
      <BottomBar />
    </div>
  );
};

export default App;
